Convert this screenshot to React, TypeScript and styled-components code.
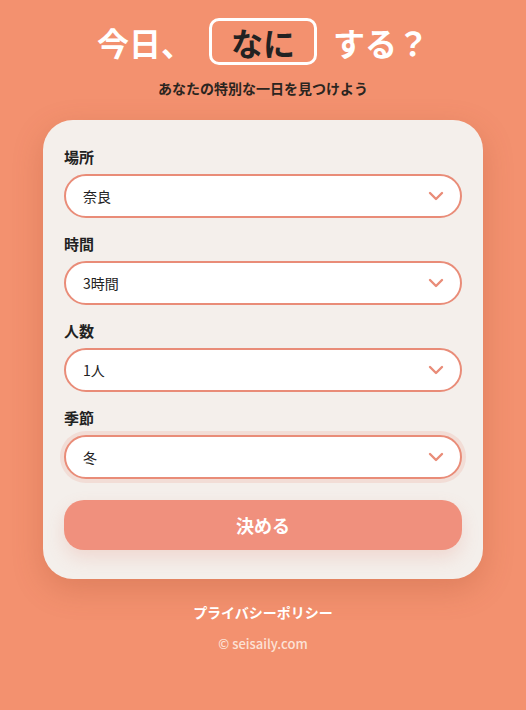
import React from 'react';
import styled, { createGlobalStyle } from 'styled-components';

const GlobalStyle = createGlobalStyle`
    html, body {
        margin: 0;
        padding: 0;
        background: #F3916F;
        font-family: "Noto Sans CJK JP", "Noto Sans", sans-serif;
    }
`

const Page = styled.div`
    min-height: 710px;
    display: flex;
    flex-direction: column;
    align-items: center;
    background: #F3916F;
`

const Title = styled.h1`
    margin: 18px 0 0;
    display: flex;
    align-items: center;
    gap: 16px;
    font-size: 32px;
    font-weight: 700;
    color: #fff;
    line-height: 1;
`

const Highlight = styled.span`
    display: inline-flex;
    align-items: center;
    justify-content: center;
    width: 102px;
    height: 41px;
    border: 3px solid #fff;
    border-radius: 10px;
    color: #222;
`

const Subtitle = styled.p`
    margin: 13px 0 0;
    font-size: 14px;
    font-weight: 700;
    color: #2b2520;
`

const Card = styled.div`
    margin-top: 22px;
    width: 440px;
    box-sizing: border-box;
    padding: 26px 21px 29px;
    background: #F4EFEB;
    border-radius: 30px;
    box-shadow: 0 10px 30px rgba(160, 70, 40, 0.25);
`

const Field = styled.div`
    margin-bottom: 15px;
`

const Label = styled.label`
    display: block;
    margin-bottom: 6px;
    font-size: 15px;
    font-weight: 700;
    color: #222;
    line-height: 22px;
`

const SelectWrap = styled.div`
    position: relative;
`

const Select = styled.select<{ $focused?: boolean }>`
    appearance: none;
    width: 100%;
    height: 44px;
    box-sizing: border-box;
    padding: 0 50px 0 17px;
    border: 2px solid #E98C78;
    border-radius: 22px;
    background: #fff;
    font-family: inherit;
    font-size: 14px;
    color: #222;
    outline: none;
    box-shadow: ${(p) => (p.$focused ? '0 0 0 4px rgba(233, 140, 120, 0.18)' : 'none')};
`

const Chevron = styled.svg`
    position: absolute;
    right: 18px;
    top: 50%;
    transform: translateY(-50%);
    pointer-events: none;
`

const Button = styled.button`
    display: block;
    width: 100%;
    height: 50px;
    margin-top: 21px;
    border: none;
    border-radius: 20px;
    background: #F0907D;
    color: #fff;
    font-family: inherit;
    font-size: 18px;
    font-weight: 700;
    box-shadow: 0 8px 18px rgba(220, 110, 90, 0.18);
`

const FooterLink = styled.a`
    margin-top: 23px;
    font-size: 14px;
    font-weight: 700;
    color: #fff;
    text-decoration: none;
`

const Copy = styled.p`
    margin: 12px 0 0;
    font-size: 13px;
    font-weight: 500;
    color: #FCE2D6;
`

const fields = [
    { label: '場所', value: '奈良' },
    { label: '時間', value: '3時間' },
    { label: '人数', value: '1人' },
    { label: '季節', value: '冬', focused: true },
]

const App: React.FC = () => {
    return (
        <Page>
            <GlobalStyle />
            <Title>
                <span>今日、</span>
                <Highlight>なに</Highlight>
                <span>する？</span>
            </Title>
            <Subtitle>あなたの特別な一日を見つけよう</Subtitle>
            <Card>
                {fields.map((f) => (
                    <Field key={f.label}>
                        <Label>{f.label}</Label>
                        <SelectWrap>
                            <Select $focused={f.focused} defaultValue={f.value}>
                                <option>{f.value}</option>
                            </Select>
                            <Chevron width="16" height="10" viewBox="0 0 16 10">
                                <path d="M2 2l6 6 6-6" fill="none" stroke="#E98C78" strokeWidth="2.4" strokeLinecap="round" strokeLinejoin="round" />
                            </Chevron>
                        </SelectWrap>
                    </Field>
                ))}
                <Button type="button">決める</Button>
            </Card>
            <FooterLink href="#">プライバシーポリシー</FooterLink>
            <Copy>© seisaily.com</Copy>
        </Page>
    )
}

export default App;
